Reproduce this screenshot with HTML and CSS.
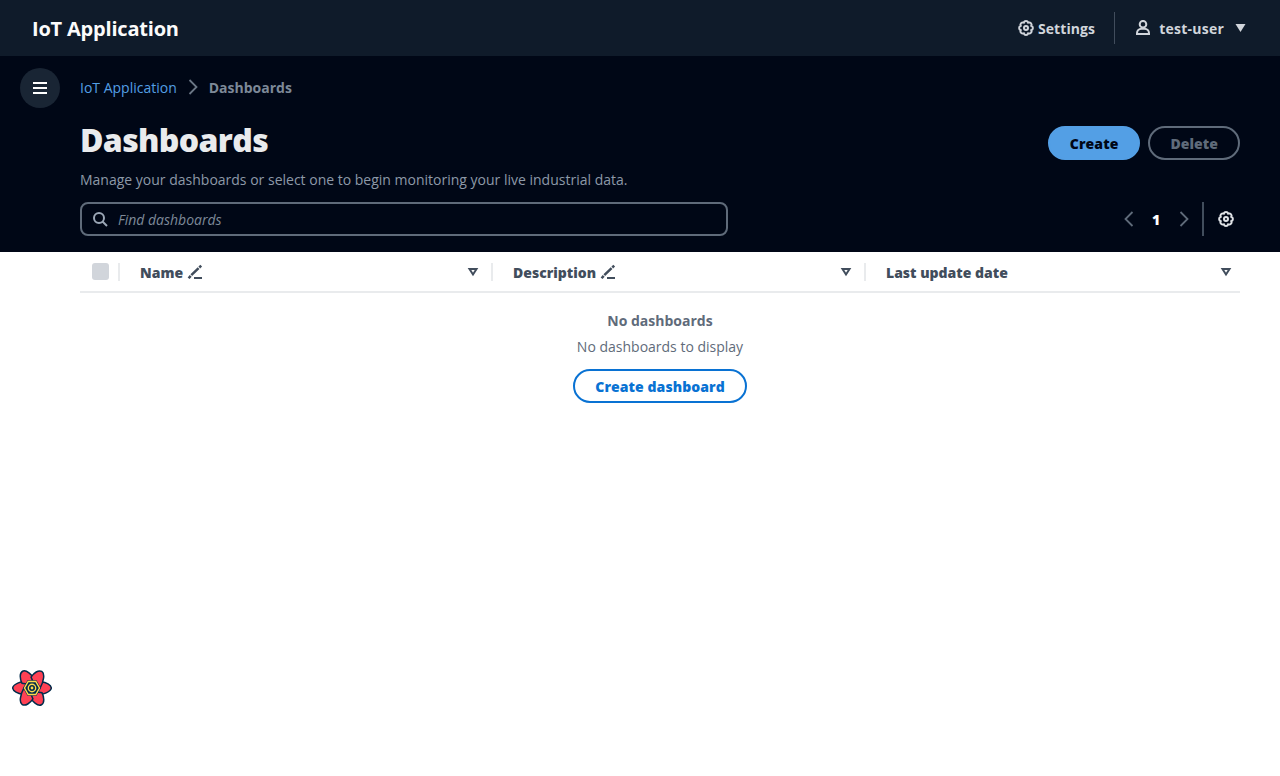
FILE: index.html
```html
<!DOCTYPE html>
<html lang="en">
<head>
<meta charset="utf-8">
<title>IoT Application</title>
<link rel="stylesheet" href="styles.css">
</head>
<body>
<svg class="defs" aria-hidden="true">
  <symbol id="gear" viewBox="0 0 16 16"><path d="M5.800 2.680A2.330 2.330 0 0 1 10.200 2.680A2.330 2.330 0 0 1 13.320 5.800A2.330 2.330 0 0 1 13.320 10.200A2.330 2.330 0 0 1 10.200 13.320A2.330 2.330 0 0 1 5.800 13.320A2.330 2.330 0 0 1 2.680 10.200A2.330 2.330 0 0 1 2.680 5.800A2.330 2.330 0 0 1 5.800 2.680Z"/><circle cx="8" cy="8" r="2"/></symbol>
  <symbol id="edit" viewBox="0 0 16 16"><path d="M7 14h8"/><path class="pencil" d="M4.300 11.200L11.600 4.200M12.300 3.500L14.200 1.700M1.600 14.300L3.700 11.900"/></symbol>
  <symbol id="sort" viewBox="0 0 16 16"><path d="M4.500 5h7L8 10.500z"/></symbol>
  <symbol id="next" viewBox="0 0 16 16"><path d="M4.500 1l7 7-7 7"/></symbol>
  <symbol id="prev" viewBox="0 0 16 16"><path d="M11.500 1l-7 7 7 7"/></symbol>
</svg>
<header class="topbar">
  <div class="brand">IoT Application</div>
  <div class="settings"><svg class="icon"><use href="#gear"/></svg><span>Settings</span></div>
  <div class="user">
    <svg class="icon" viewBox="0 0 16 16"><circle cx="8" cy="4.200" r="3.300"/><path d="M2 14v-.7c0-2.700 2-4.500 4.500-4.500h3c2.500 0 4.500 1.800 4.500 4.500v.7z"/></svg>
    <span>test-user</span>
    <svg class="caret" viewBox="0 0 10 8"><path d="M0 0h10L5 8z"/></svg>
  </div>
</header>
<section class="hero">
  <button class="menu" aria-label="Menu"><svg viewBox="0 0 16 16"><path d="M1 3h14M1 8h14M1 13h14"/></svg></button>
  <div class="hero-body">
    <nav class="crumbs"><a>IoT Application</a><svg class="icon thin"><use href="#next"/></svg><b>Dashboards</b></nav>
    <div class="heading">
      <h1>Dashboards</h1>
      <div class="actions"><button class="btn primary">Create</button><button class="btn disabled">Delete</button></div>
    </div>
    <p class="lead">Manage your dashboards or select one to begin monitoring your live industrial data.</p>
    <div class="tools">
      <div class="search"><svg class="icon" viewBox="0 0 16 16"><circle cx="7" cy="7" r="5"/><path d="M10.500 10.500L15 15"/></svg><span>Find dashboards</span></div>
      <div class="pager"><svg class="icon thin"><use href="#prev"/></svg><b>1</b><svg class="icon thin"><use href="#next"/></svg></div>
      <div class="prefs"><svg class="icon"><use href="#gear"/></svg></div>
    </div>
  </div>
</section>
<main class="table">
  <div class="thead">
    <div class="th select"><span class="check"></span></div>
    <div class="th"><span>Name</span><svg class="icon edit"><use href="#edit"/></svg><svg class="icon sort"><use href="#sort"/></svg></div>
    <div class="th"><span>Description</span><svg class="icon edit"><use href="#edit"/></svg><svg class="icon sort"><use href="#sort"/></svg></div>
    <div class="th"><span>Last update date</span><svg class="icon sort"><use href="#sort"/></svg></div>
  </div>
  <div class="empty">
    <b>No dashboards</b>
    <span>No dashboards to display</span>
    <button class="btn outline">Create dashboard</button>
  </div>
</main>
<svg class="flower" viewBox="-20 -18 40 36">
  <g class="petals">
    <path id="petal" d="M-3.500 -7.500C-11-7-19.300-3.500-19.300 0C-19.300 3.200-14 5.500-9 6.200L-5 1Z"/>
    <use href="#petal" transform="rotate(180)"/>
    <path id="lobe" d="M-4 -7C-12-6.800-19.200-4-19.200-.2C-19.200 3.600-14 6-9 6.300L-5 1Z" transform="rotate(60)"/>
    <use href="#lobe" transform="rotate(60)"/><use href="#lobe" transform="rotate(180)"/><use href="#lobe" transform="rotate(240)"/>
  </g>
  <path class="core" d="M-4.500 -7.800H4.500L9 0L4.500 7.800H-4.500L-9 0Z"/>
  <path class="ring" d="M-3.800 -6.500H3.800L7.500 0L3.800 6.500H-3.800L-7.500 0Z"/>
  <circle class="ring" r="3.700"/><circle class="dot" r="1.400"/>
</svg>
</body>
</html>
```
FILE: styles.css
```css
* { box-sizing: border-box; }
body { margin: 0; background: #fff; font: 14px/20px "Open Sans", sans-serif; color: #414d5c; }
svg { display: block; flex: none; fill: none; stroke: currentColor; }
.defs { position: absolute; width: 0; height: 0; }
.icon { width: 16px; height: 16px; stroke-width: 2; }
.thin { stroke-width: 1.8; }
.pencil { stroke-width: 2.5; }
button { font: inherit; margin: 0; }

.topbar { height: 56px; background: #0f1b2a; color: #d1d5db; display: flex; align-items: center; padding: 0 34px 0 32px; font-weight: 700; }
.brand { flex: 1; font-size: 20px; line-height: 24px; letter-spacing: -0.2px; color: #fbfbfb; padding-top: 1px; }
.settings { display: flex; align-items: center; gap: 4px; padding-right: 19px; }
.settings span, .user span { padding-top: 2px; }
.settings span { letter-spacing: 0.1px; }
.user { height: 32px; border-left: 1px solid #414d5c; display: flex; align-items: center; padding-left: 20px; }
.user span { margin: 0 11px 0 8px; letter-spacing: 0.24px; }
.user .caret { width: 11px; height: 8px; fill: currentColor; stroke: none; }

.hero { height: 196px; background: #000716; display: flex; padding: 12px 40px 0 20px; }
.menu { width: 40px; height: 40px; border: 0; border-radius: 50%; background: #192534; color: #fff; padding: 12px; }
.menu svg { width: 16px; height: 16px; stroke-width: 2; }
.hero-body { flex: 1; margin-left: 20px; }
.crumbs { display: flex; align-items: center; height: 40px; color: #7d8998; }
.crumbs a { color: #539fe5; }
.crumbs .icon { margin: 0 8px 2px; color: #6b7786; }
.heading { display: flex; justify-content: space-between; margin-top: 12px; height: 48px; }
h1 { margin: 0; font-size: 32px; line-height: 40px; font-weight: 800; letter-spacing: -0.64px; color: #e9ebed; }
.actions { display: flex; gap: 8px; padding-top: 6px; }
.btn { height: 34px; border: 2px solid; border-radius: 17px; padding: 2px 20px 0; font-weight: 800; letter-spacing: 0.07px; background: none; }
.primary { background: #539fe5; border-color: #539fe5; color: #000716; }
.disabled { color: #5f6b7a; }
.outline { color: #0972d3; }
.lead { margin: 2px 0 12px; color: #8d99a8; }
.tools { display: flex; align-items: center; height: 34px; }
.search { width: 648px; height: 34px; border: 2px solid #5f6b7a; border-radius: 8px; display: flex; align-items: center; gap: 10px; padding: 0 10px; color: #7d8998; font-style: italic; }
.search span { padding-top: 2px; }
.search .icon { color: #9ba7b6; }
.pager { margin-left: auto; display: flex; align-items: center; color: #5f6b7a; }
.pager b { width: 39px; text-align: center; color: #fff; font-weight: 800; padding-top: 2px; }
.prefs { border-left: 2px solid #414d5c; margin-left: 10.5px; padding: 9px 6px 9px 14px; color: #e0e3e7; }

.table { margin: 0 40px 0 80px; }
.thead { display: grid; grid-template-columns: 40px 373px 373px 1fr; height: 41px; border-bottom: 2px solid #e9ebed; }
.th { position: relative; display: flex; align-items: center; padding: 2px 12px 0 20px; font-weight: 800; }
.th:not(:last-child)::after { content: ""; position: absolute; right: 0; top: 11px; width: 2px; height: 18px; background: #e9ebed; }
.select { padding: 0 0 0 12px; }
.check { width: 17px; height: 17px; border-radius: 3px; background: #d1d5db; }
.edit { margin: 0 0 2px 4px; }
.sort { margin: 0 0 2px auto; }
.th:last-child .sort { margin-right: -6px; }
.empty { display: flex; flex-direction: column; align-items: center; padding-top: 18px; color: #5f6b7a; }
.empty span { margin: 6px 0 12px; }
.flower { position: fixed; left: 12px; bottom: 70px; width: 40px; height: 36px; }
.petals { fill: #ff4154; stroke: #002c4b; stroke-width: 1.5; }
.core { fill: #002c4b; stroke: none; }
.ring { stroke: #ffd94c; stroke-width: 1.400; }
.dot { fill: #ffd94c; stroke: none; }
```
